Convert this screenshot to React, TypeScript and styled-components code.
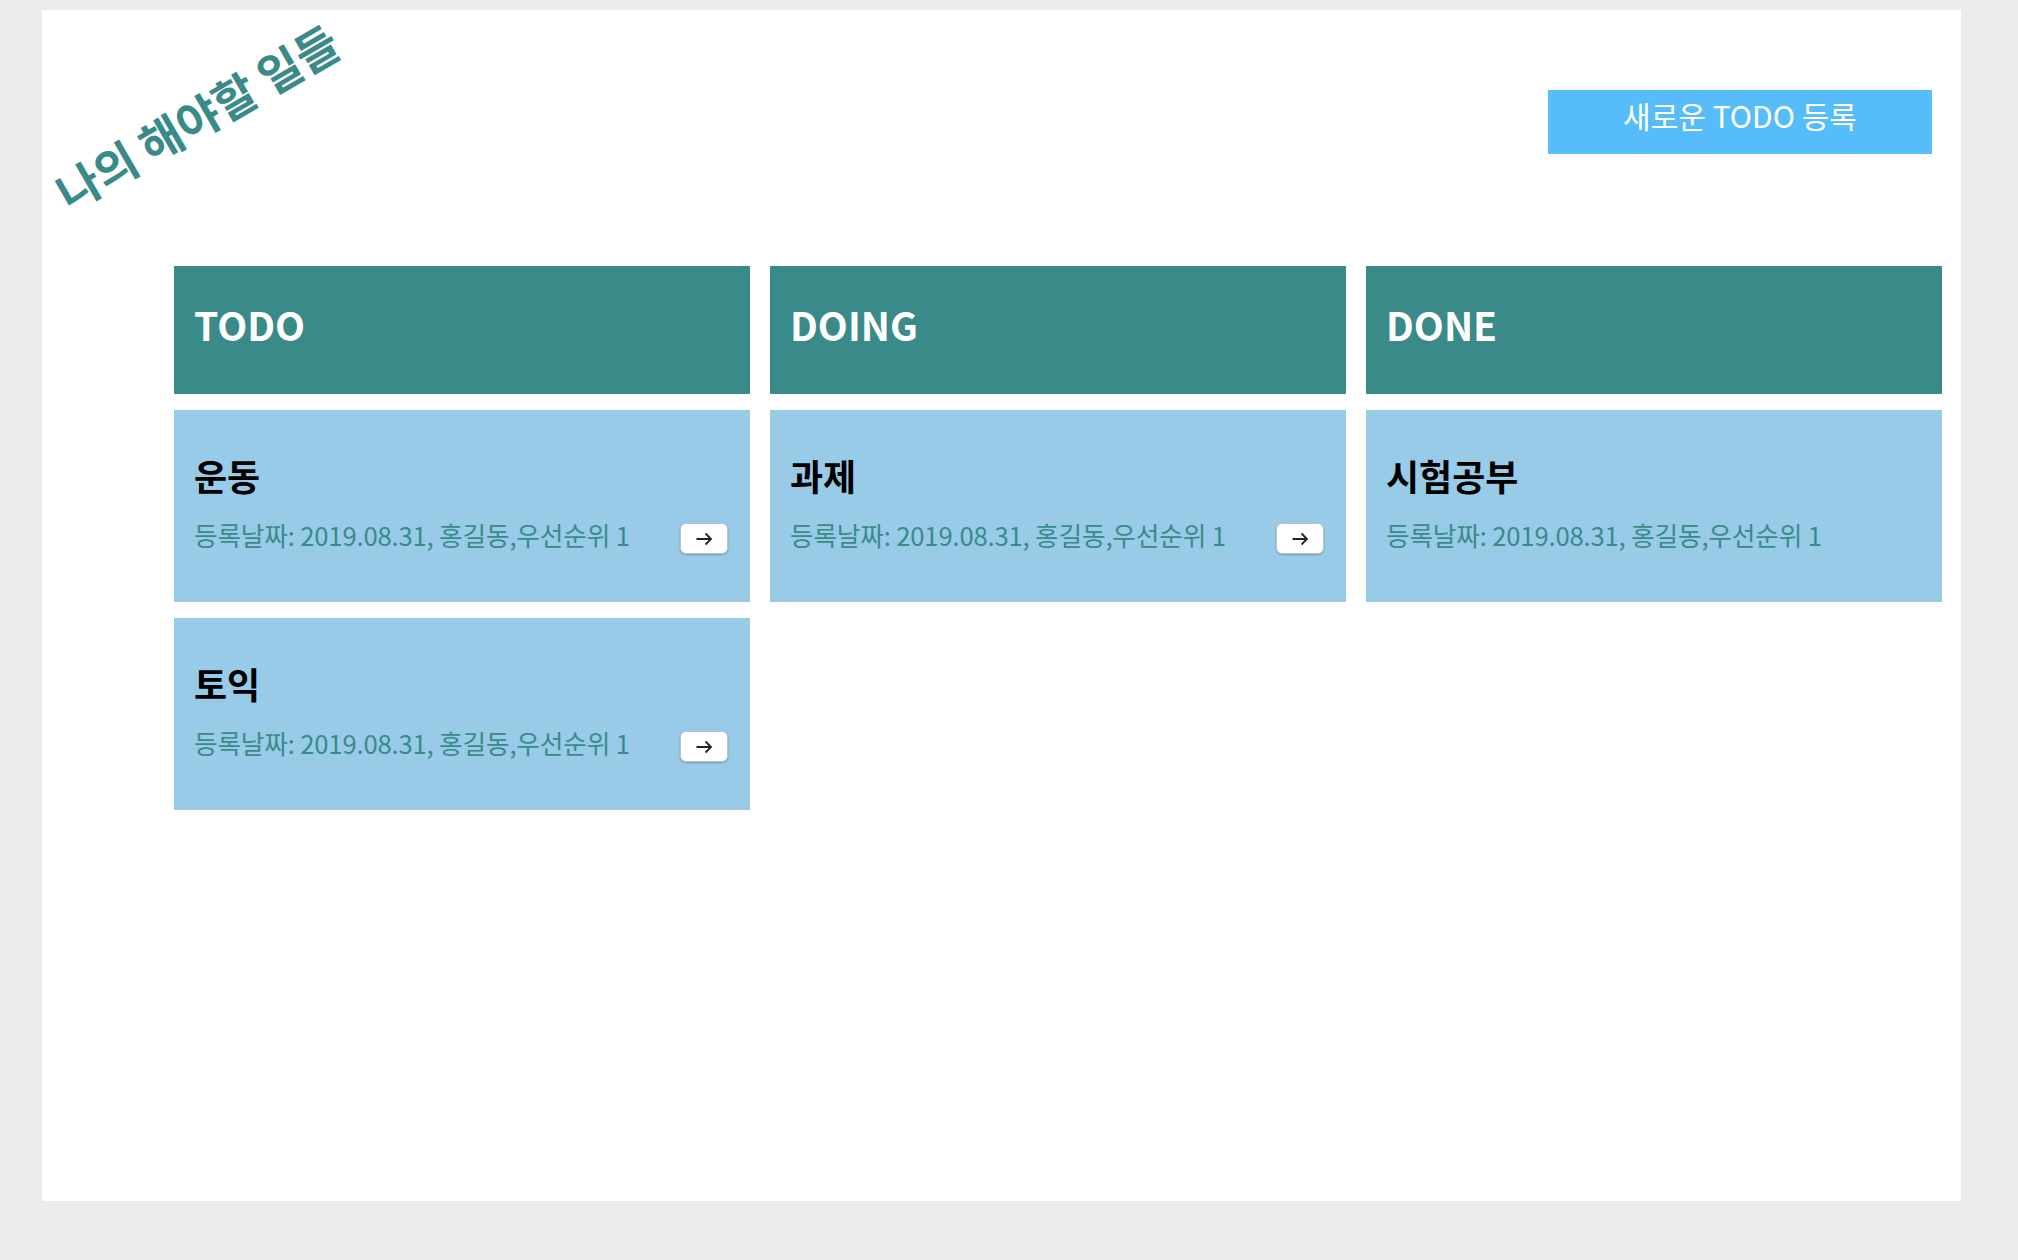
import React from 'react';
import styled, { createGlobalStyle } from 'styled-components';

const GlobalStyle = createGlobalStyle`
  html, body {
    margin: 0;
    padding: 0;
    background: #ececec;
    font-family: 'Noto Sans CJK KR', 'Noto Sans', sans-serif;
  }
`;

const TEAL = '#3a8a8a';

const Page = styled.div`
  padding: 10px 0 0 42px;
`;

const Panel = styled.main`
  width: 1919px;
  height: 1191px;
  background: #ffffff;
  box-sizing: border-box;
`;

const TopBar = styled.header`
  height: 256px;
  display: flex;
  justify-content: space-between;
  align-items: flex-start;
  padding-right: 29px;
  box-sizing: border-box;
`;

const Title = styled.h1`
  margin: 76px 0 0 -4px;
  font-size: 46px;
  line-height: 60px;
  font-weight: 700;
  color: ${TEAL};
  white-space: nowrap;
  transform: rotate(-30deg);
  transform-origin: center;
`;

const NewButton = styled.button`
  margin-top: 80px;
  width: 384px;
  height: 64px;
  border: none;
  background: #57bdfa;
  color: #ffffff;
  font-family: inherit;
  font-size: 30px;
  font-weight: 400;
  line-height: 1;
  padding: 10px 0 0;
  display: flex;
  justify-content: center;
  align-items: flex-start;
  box-sizing: border-box;
  cursor: pointer;
`;

const Board = styled.section`
  margin-left: 132px;
  display: grid;
  grid-template-columns: repeat(3, 576px);
  column-gap: 20px;
  align-items: start;
`;

const Column = styled.div`
  display: flex;
  flex-direction: column;
  gap: 16px;
`;

const ColumnHeader = styled.h2`
  margin: 0;
  height: 128px;
  background: ${TEAL};
  color: #ffffff;
  font-size: 39px;
  font-weight: 700;
  display: flex;
  align-items: center;
  padding: 0 0 12px 20px;
  box-sizing: border-box;
`;

const Card = styled.article`
  height: 192px;
  background: #98cbe8;
  padding: 42px 22px 0 20px;
  box-sizing: border-box;
`;

const CardTitle = styled.h3`
  margin: 0;
  font-size: 36px;
  line-height: 46px;
  font-weight: 700;
  color: #000000;
`;

const MetaRow = styled.div`
  margin-top: 17px;
  height: 40px;
  display: flex;
  justify-content: space-between;
  align-items: center;
`;

const Meta = styled.span`
  font-size: 25.7px;
  line-height: 32px;
  color: ${TEAL};
  letter-spacing: -0.2px;
`;

const MoveButton = styled.button`
  width: 48px;
  height: 31px;
  margin-top: 7px;
  padding: 0;
  border: 1px solid #b9c3c9;
  border-radius: 6px;
  background: #ffffff;
  box-shadow: 0 1px 2px rgba(0, 0, 0, 0.25);
  display: flex;
  align-items: center;
  justify-content: center;
  cursor: pointer;
`;

const ArrowIcon = () => (
  <svg width="18" height="14" viewBox="0 0 18 14" fill="none">
    <path d="M1.5 7H16M10.5 1.5L16 7L10.5 12.5" stroke="#222" strokeWidth="1.8" />
  </svg>
);

type Todo = { title: string; date: string; owner: string; priority: number };

const columns: { name: string; movable: boolean; items: Todo[] }[] = [
  {
    name: 'TODO',
    movable: true,
    items: [
      { title: '운동', date: '2019.08.31', owner: '홍길동', priority: 1 },
      { title: '토익', date: '2019.08.31', owner: '홍길동', priority: 1 },
    ],
  },
  {
    name: 'DOING',
    movable: true,
    items: [{ title: '과제', date: '2019.08.31', owner: '홍길동', priority: 1 }],
  },
  {
    name: 'DONE',
    movable: false,
    items: [{ title: '시험공부', date: '2019.08.31', owner: '홍길동', priority: 1 }],
  },
];

export default function App() {
  return (
    <>
      <GlobalStyle />
      <Page>
        <Panel>
          <TopBar>
            <Title>나의 해야할 일들</Title>
            <NewButton>새로운 TODO 등록</NewButton>
          </TopBar>
          <Board>
            {columns.map((col) => (
              <Column key={col.name}>
                <ColumnHeader>{col.name}</ColumnHeader>
                {col.items.map((item) => (
                  <Card key={item.title}>
                    <CardTitle>{item.title}</CardTitle>
                    <MetaRow>
                      <Meta>
                        등록날짜: {item.date}, {item.owner},우선순위 {item.priority}
                      </Meta>
                      {col.movable && (
                        <MoveButton aria-label="다음 단계로 이동">
                          <ArrowIcon />
                        </MoveButton>
                      )}
                    </MetaRow>
                  </Card>
                ))}
              </Column>
            ))}
          </Board>
        </Panel>
      </Page>
    </>
  );
}
